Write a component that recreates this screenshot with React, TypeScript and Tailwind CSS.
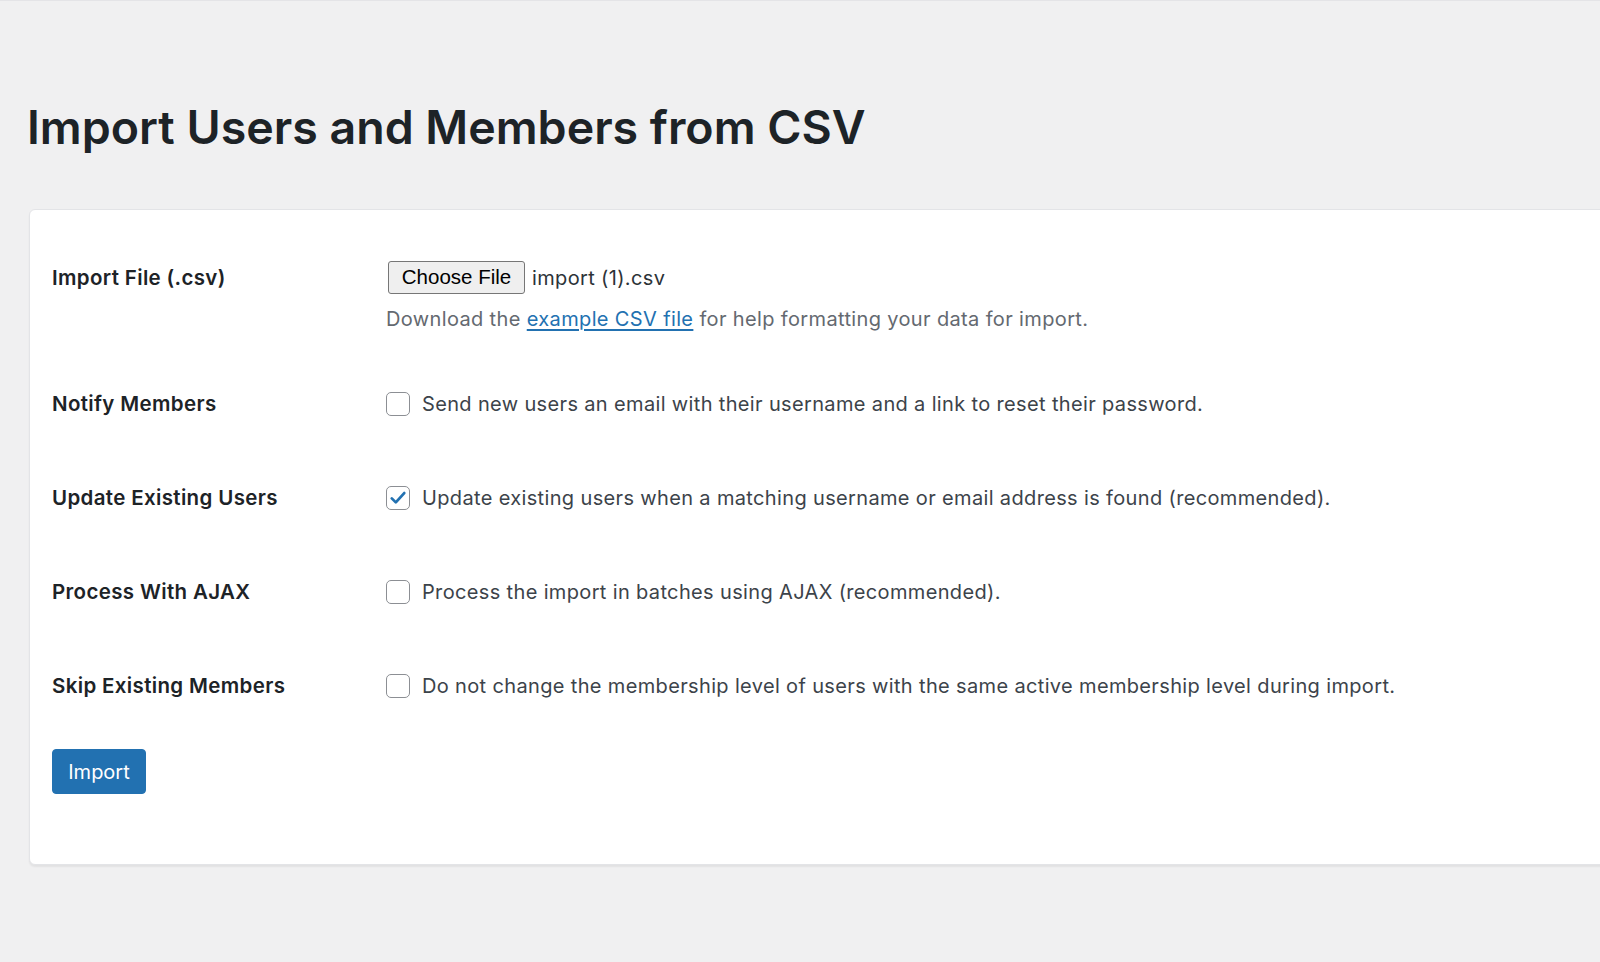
import { useState } from 'react'

const rows = [
  {
    key: 'notify',
    label: 'Notify Members',
    text: 'Send new users an email with their username and a link to reset their password.',
    checked: false,
  },
  {
    key: 'update',
    label: 'Update Existing Users',
    text: 'Update existing users when a matching username or email address is found (recommended).',
    checked: true,
  },
  {
    key: 'ajax',
    label: 'Process With AJAX',
    text: 'Process the import in batches using AJAX (recommended).',
    checked: false,
  },
  {
    key: 'skip',
    label: 'Skip Existing Members',
    text: 'Do not change the membership level of users with the same active membership level during import.',
    checked: false,
  },
]

function Checkbox({ checked, onChange }: { checked: boolean; onChange: () => void }) {
  return (
    <button
      type="button"
      onClick={onChange}
      className="flex items-center justify-center w-[24px] h-[24px] shrink-0 bg-white border border-[#8c8f94] rounded-[5px]"
    >
      {checked && (
        <svg viewBox="0 0 24 24" className="w-[22px] h-[22px]">
          <path
            d="M5.2 12.4 L9.6 16.8 L18.8 6.6"
            fill="none"
            stroke="#2271b1"
            strokeWidth="3"
            strokeLinecap="round"
            strokeLinejoin="round"
          />
        </svg>
      )}
    </button>
  )
}

export default function App() {
  const [values, setValues] = useState<Record<string, boolean>>(
    Object.fromEntries(rows.map(r => [r.key, r.checked]))
  )

  return (
    <div className="min-h-screen w-full overflow-hidden bg-[#f0f0f1] border-t border-[#e4e4e7] font-['Inter',sans-serif]">
      <h1 className="mt-[103px] pl-[27px] text-[46.5px] leading-[46px] font-semibold text-[#1d2327]">
        Import Users and Members from CSV
      </h1>

      <div className="mt-[59px] ml-[29px] mr-[-40px] bg-white border border-[#e3e4e7] rounded-[6px] shadow-[0_2px_2px_rgba(0,0,0,0.06)] pt-[51px] pb-[70px] pl-[22px]">
        {/* import file */}
        <div className="grid grid-cols-[334px_1fr]">
          <div className="text-[20.5px] leading-[33px] tracking-[0.35px] font-semibold text-[#1d2327]">
            Import File (.csv)
          </div>
          <div>
            <div className="flex items-center gap-[7px]">
              <button
                type="button"
                className="ml-[2px] h-[33px] w-[137px] bg-[#efefef] border border-[#767676] rounded-[3px] text-[20.5px] text-black font-['Liberation_Sans',sans-serif]"
              >
                Choose File
              </button>
              <span className="text-[20px] tracking-[0.35px] text-[#2c3338]">import (1).csv</span>
            </div>
            <p className="mt-[11px] text-[20px] leading-[28px] tracking-[0.36px] text-[#646970]">
              Download the{' '}
              <a href="#" className="text-[#2271b1] underline underline-offset-[3px]">
                example CSV file
              </a>{' '}
              for help formatting your data for import.
            </p>
          </div>
        </div>

        {rows.map((r, i) => (
          <div
            key={r.key}
            className={`grid grid-cols-[334px_1fr] items-center ${i === 0 ? 'mt-[57px]' : 'mt-[66px]'}`}
          >
            <div className="text-[20.5px] leading-[28px] tracking-[0.35px] font-semibold text-[#1d2327]">
              {r.label}
            </div>
            <label className="flex items-center gap-[12px] text-[20px] leading-[28px] tracking-[0.35px] text-[#3c434a]">
              <Checkbox
                checked={values[r.key]}
                onChange={() => setValues({ ...values, [r.key]: !values[r.key] })}
              />
              <span>{r.text}</span>
            </label>
          </div>
        ))}

        <button
          type="button"
          className="mt-[49px] h-[45px] w-[94px] bg-[#2271b1] border border-[#2271b1] rounded-[4px] text-white text-[20px]"
        >
          Import
        </button>
      </div>
    </div>
  )
}
